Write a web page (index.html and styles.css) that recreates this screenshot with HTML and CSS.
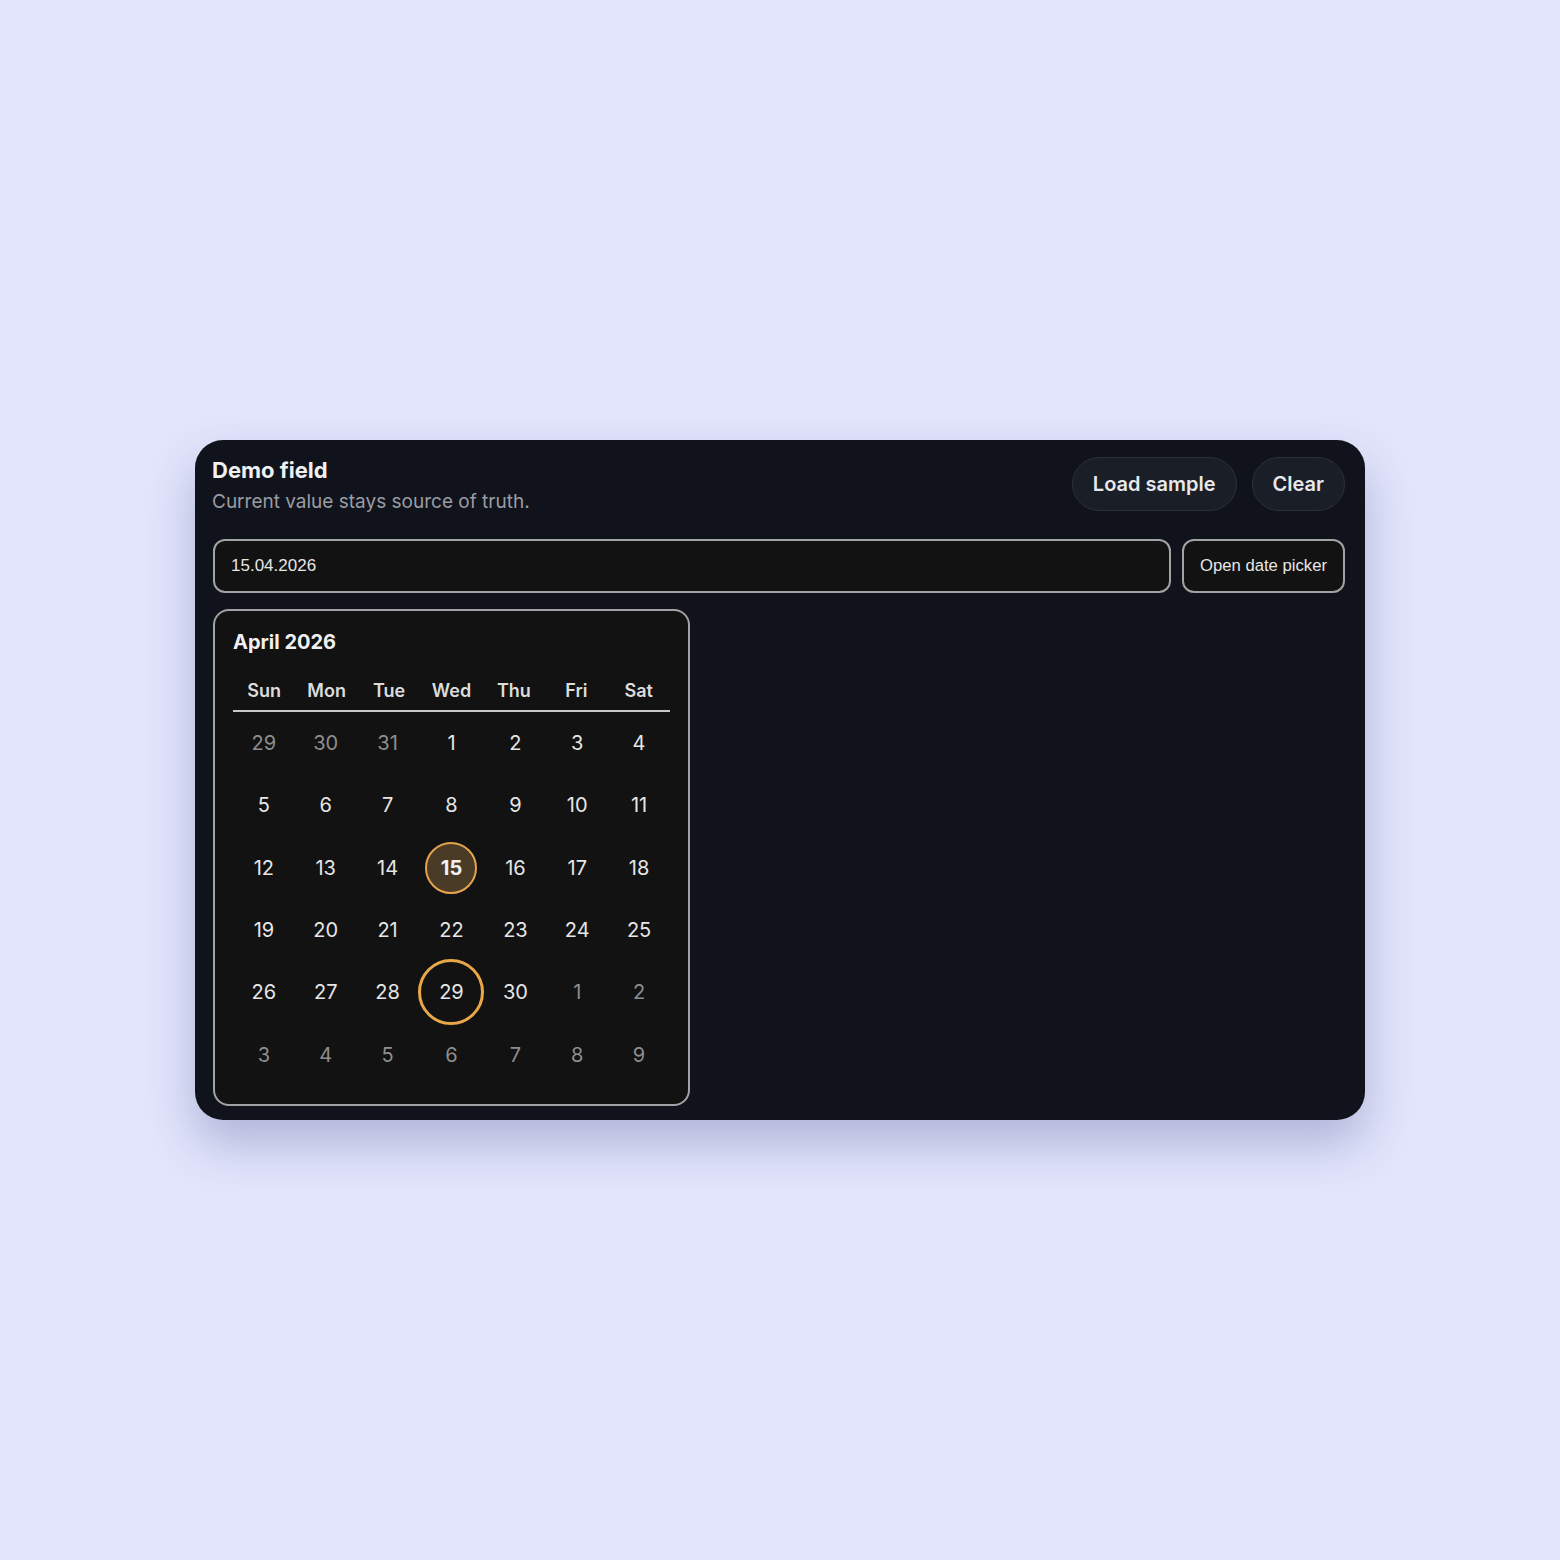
FILE: index.html
```html
<!DOCTYPE html>
<html lang="en">
<head>
<meta charset="utf-8">
<title>Demo field</title>
<link rel="stylesheet" href="styles.css">
</head>
<body>
<main class="card">
  <header class="head">
    <div class="titles">
      <h1 class="title">Demo field</h1>
      <p class="subtitle">Current value stays source of truth.</p>
    </div>
    <div class="actions">
      <button class="pill">Load sample</button>
      <button class="pill">Clear</button>
    </div>
  </header>
  <div class="field-row">
    <input class="date-input" type="text" value="15.04.2026">
    <button class="open-btn">Open date picker</button>
  </div>
  <section class="calendar">
    <h2 class="cal-title">April 2026</h2>
    <div class="grid weekdays">
      <div>Sun</div><div>Mon</div><div>Tue</div><div>Wed</div><div>Thu</div><div>Fri</div><div>Sat</div>
    </div>
    <div class="grid days">
      <div class="day out"><span>29</span></div>
      <div class="day out"><span>30</span></div>
      <div class="day out"><span>31</span></div>
      <div class="day"><span>1</span></div>
      <div class="day"><span>2</span></div>
      <div class="day"><span>3</span></div>
      <div class="day"><span>4</span></div>
      <div class="day"><span>5</span></div>
      <div class="day"><span>6</span></div>
      <div class="day"><span>7</span></div>
      <div class="day"><span>8</span></div>
      <div class="day"><span>9</span></div>
      <div class="day"><span>10</span></div>
      <div class="day"><span>11</span></div>
      <div class="day"><span>12</span></div>
      <div class="day"><span>13</span></div>
      <div class="day"><span>14</span></div>
      <div class="day selected"><span>15</span></div>
      <div class="day"><span>16</span></div>
      <div class="day"><span>17</span></div>
      <div class="day"><span>18</span></div>
      <div class="day"><span>19</span></div>
      <div class="day"><span>20</span></div>
      <div class="day"><span>21</span></div>
      <div class="day"><span>22</span></div>
      <div class="day"><span>23</span></div>
      <div class="day"><span>24</span></div>
      <div class="day"><span>25</span></div>
      <div class="day"><span>26</span></div>
      <div class="day"><span>27</span></div>
      <div class="day"><span>28</span></div>
      <div class="day focused"><span>29</span></div>
      <div class="day"><span>30</span></div>
      <div class="day out"><span>1</span></div>
      <div class="day out"><span>2</span></div>
      <div class="day out"><span>3</span></div>
      <div class="day out"><span>4</span></div>
      <div class="day out"><span>5</span></div>
      <div class="day out"><span>6</span></div>
      <div class="day out"><span>7</span></div>
      <div class="day out"><span>8</span></div>
      <div class="day out"><span>9</span></div>
    </div>
  </section>
</main>
</body>
</html>
```
FILE: styles.css
```css
* { box-sizing: border-box; }
html, body { margin: 0; padding: 0; }
body {
  background: #e2e5fb;
  min-height: 100vh;
  display: flex;
  align-items: center;
  justify-content: center;
  font-family: Inter, "Noto Sans", sans-serif;
}
.card {
  width: 1170px;
  height: 680px;
  background: #10131b;
  border-radius: 28px;
  padding: 17px 20px 14px 17px;
  box-shadow: 0 24px 48px rgba(60, 70, 140, 0.3);
}
.head {
  display: flex;
  justify-content: space-between;
  align-items: flex-start;
  height: 54px;
}
.title {
  margin: 0;
  font-size: 22px;
  font-weight: 700;
  color: #f0f0f2;
  line-height: 27px;
}
.subtitle {
  margin: 6px 0 0;
  font-size: 19px;
  color: #9a9ca3;
  line-height: 23px;
}
.actions {
  display: flex;
  gap: 15px;
}
.pill {
  height: 54px;
  padding: 0 20px;
  border-radius: 27px;
  background: #1a1e27;
  border: 1.5px solid #2b303b;
  color: #e8e8ea;
  font-family: Inter, "Noto Sans", sans-serif;
  font-size: 20px;
  font-weight: 600;
}
.field-row {
  display: flex;
  gap: 11px;
  margin-top: 28px;
  margin-left: 1px;
  height: 54px;
}
.date-input {
  flex: 1;
  height: 54px;
  background: #121212;
  border: 2px solid #a2a2a4;
  border-radius: 12px;
  color: #e6e6e6;
  font-family: "Liberation Sans", Arial, sans-serif;
  font-size: 17px;
  padding: 0 16px;
  outline: none;
}
.open-btn {
  width: 163px;
  height: 54px;
  background: #121212;
  border: 2px solid #a2a2a4;
  border-radius: 12px;
  color: #e6e6e6;
  font-family: "Liberation Sans", Arial, sans-serif;
  font-size: 16.7px;
  padding: 0;
}
.calendar {
  margin-top: 16px;
  margin-left: 1px;
  width: 477px;
  background: #121212;
  border: 2px solid #a2a2a4;
  border-radius: 16px;
  padding: 18px;
}
.cal-title {
  margin: 0;
  font-size: 20px;
  font-weight: 700;
  color: #f0f0f2;
  line-height: 26px;
}
.grid {
  display: grid;
  grid-template-columns: repeat(7, 1fr);
}
.weekdays {
  margin-top: 15px;
  height: 42px;
  border-bottom: 2px solid #c8c8c8;
  align-items: center;
}
.weekdays div {
  text-align: center;
  font-size: 18px;
  font-weight: 600;
  color: #dcdcdc;
}
.days {
  grid-auto-rows: 62.3px;
}
.day {
  display: flex;
  align-items: center;
  justify-content: center;
  font-size: 20px;
  color: #e6e6e6;
}
.day span {
  display: flex;
  align-items: center;
  justify-content: center;
  width: 52px;
  height: 52px;
  border-radius: 50%;
  flex: none;
}
.day.out { color: #8e8e8e; }
.day.selected span {
  background: #4a3b27;
  border: 2.5px solid #e5a44c;
  font-weight: 700;
  color: #f2f2f2;
}
.day.focused span {
  width: 66px;
  height: 66px;
  border: 3px solid #e9a748;
}
```
